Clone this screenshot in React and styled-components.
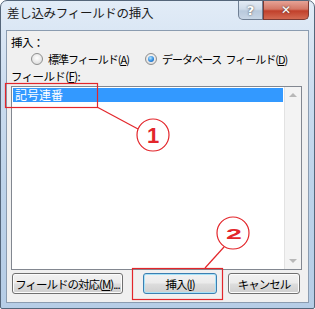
import React from "react"
import styled, { createGlobalStyle } from "styled-components"

const Global = createGlobalStyle`
html, body {
  margin: 0;
  padding: 0;
  background: #ffffff;
}
* {
  box-sizing: border-box;
}
`

const Window = styled.div`
position: relative;
width: 315px;
height: 309px;
display: flex;
flex-direction: column;
padding: 0 5px 5px 5px;
border: 1px solid #55667a;
border-radius: 7px 7px 2px 2px;
background: linear-gradient(180deg, #e2ecf7 0%, #cbdcef 30%, #bdd3ea 60%, #b6cde6 100%);
font-family: "Noto Sans CJK JP", "Noto Sans", sans-serif;
color: #000;
overflow: hidden;
`

const TitleBar = styled.div`
height: 29px;
display: flex;
align-items: flex-start;
flex-shrink: 0;
`

const Title = styled.div`
margin-top: 4px;
padding-left: 1px;
font-size: 12.5px;
line-height: 16px;
letter-spacing: -0.3px;
color: #1b1b1b;
`

const CaptionButtons = styled.div`
margin-left: auto;
display: flex;
`

const CaptionButton = styled.div`
width: ${p => p.$w}px;
height: 19px;
display: flex;
align-items: center;
justify-content: center;
border: 1px solid ${p => (p.$close ? "#7c3a33" : "#6f7f94")};
border-top: none;
border-radius: ${p => (p.$close ? "0 0 5px 0" : "0 0 0 5px")};
background: ${p =>
  p.$close
    ? "linear-gradient(180deg, #e6a396 0%, #d47766 45%, #c1402b 55%, #d36a52 100%)"
    : "linear-gradient(180deg, #e3ebf4 0%, #cfdbe9 45%, #b8c9dc 55%, #c8d6e6 100%)"};
color: #ffffff;
font-family: "DejaVu Sans", sans-serif;
font-weight: bold;
font-size: ${p => (p.$close ? 12 : 13)}px;
text-shadow: 0 0 2px #333;
`

const Panel = styled.div`
flex: 1;
display: flex;
flex-direction: column;
background: #f0f0f0;
border: 1px solid #8b9cb0;
padding: 4px 0 0 4px;
font-size: 11px;
line-height: 14px;
`

const Label = styled.div`
margin-top: ${p => p.$mt || 0}px;
font-size: 11.5px;
letter-spacing: -0.6px;
line-height: 14px;
`

const RadioRow = styled.div`
display: flex;
align-items: center;
margin-top: 3px;
padding-left: 20px;
height: 14px;
`

const RadioItem = styled.label`
display: flex;
align-items: center;
margin-right: ${p => p.$mr || 0}px;
font-size: 11px;
letter-spacing: -1px;
white-space: pre;
`

const WordGap = styled.span`
display: inline-block;
width: 4px;
`

const RadioCircle = styled.span`
position: relative;
width: 12px;
height: 12px;
margin-right: 5px;
border-radius: 50%;
border: 1px solid #8e8f8f;
background: radial-gradient(circle at 50% 40%, #ffffff 0%, #e6e6e6 60%, #d2d2d2 100%);
flex-shrink: 0;

&::after {
  content: "";
  display: ${p => (p.$checked ? "block" : "none")};
  position: absolute;
  left: 2px;
  top: 2px;
  width: 6px;
  height: 6px;
  border-radius: 50%;
  background: radial-gradient(circle at 40% 35%, #b5e6ff 0%, #2f8be0 55%, #14519c 100%);
}
`

const ListBox = styled.div`
margin-top: 3px;
margin-right: 6px;
height: 184px;
display: flex;
border: 1px solid #828790;
background: #ffffff;
`

const ListItems = styled.div`
flex: 1;
padding: 1px 1px 0 1px;
`

const ListRow = styled.div`
height: 14px;
padding-left: 2px;
font-size: 12px;
line-height: 14px;
background: ${p => (p.$selected ? "#3399ff" : "transparent")};
color: ${p => (p.$selected ? "#ffffff" : "#000000")};
`

const ScrollBar = styled.div`
width: 17px;
display: flex;
flex-direction: column;
justify-content: space-between;
align-items: center;
padding: 6px 0 6px 0;
background: #f3f3f3;
border-left: 1px solid #e2e2e2;
`

const Arrow = styled.span`
width: 0;
height: 0;
border-left: 4px solid transparent;
border-right: 4px solid transparent;
${p =>
  p.$down
    ? "border-top: 4px solid #b8b8b8;"
    : "border-bottom: 4px solid #b8b8b8;"}
`

const ButtonRow = styled.div`
display: flex;
margin-top: 3px;
padding-left: 1px;
`

const Button = styled.div`
width: ${p => p.$w}px;
height: 21px;
margin-left: ${p => p.$ml || 0}px;
display: flex;
align-items: center;
justify-content: center;
border: 1px solid ${p => (p.$default ? "#3c7fb1" : "#707070")};
border-radius: 3px;
background: linear-gradient(180deg, #f2f2f2 0%, #ebebeb 48%, #dddddd 52%, #cfcfcf 100%);
box-shadow: inset 0 0 0 1px ${p => (p.$default ? "#a6e2f8" : "#fcfcfc")};
font-size: 11.5px;
letter-spacing: -1px;
white-space: nowrap;
`

const Overlay = styled.svg`
position: absolute;
left: -1px;
top: -1px;
pointer-events: none;
`

const Annotations = () => (
  <Overlay width="315" height="309" viewBox="0 0 315 309">
    <g stroke="#e3262b" fill="none" strokeWidth="1.2">
      <rect x="5.5" y="83.5" width="92" height="24" />
      <line x1="97" y1="107" x2="138" y2="129" />
      <circle cx="153" cy="135" r="16" />
      <rect x="132.5" y="268.5" width="90" height="31" />
      <line x1="205" y1="268" x2="224" y2="247" />
      <circle cx="233" cy="233" r="16" />
    </g>
    <text x="153" y="143" textAnchor="middle" fill="#e3262b" fontFamily="Liberation Sans, sans-serif" fontWeight="bold" fontSize="22">1</text>
    <text x="234" y="240" textAnchor="middle" fill="#e3262b" fontFamily="Liberation Sans, sans-serif" fontWeight="bold" fontSize="19" transform="translate(234 236) scale(1.5 0.8) translate(-234 -236)">2</text>
  </Overlay>
)

const App = () => {
  return (
    <>
      <Global />
      <Window>
        <TitleBar>
          <Title>差し込みフィールドの挿入</Title>
          <CaptionButtons>
            <CaptionButton $w={25}>?</CaptionButton>
            <CaptionButton $w={46} $close>✕</CaptionButton>
          </CaptionButtons>
        </TitleBar>
        <Panel>
          <Label>挿入：</Label>
          <RadioRow>
            <RadioItem $mr={16}>
              <RadioCircle />
              標準フィールド(<u>A</u>)
            </RadioItem>
            <RadioItem>
              <RadioCircle $checked />
              データベース<WordGap> </WordGap>フィールド(<u>D</u>)
            </RadioItem>
          </RadioRow>
          <Label $mt={3}>フィールド(<u>F</u>):</Label>
          <ListBox>
            <ListItems>
              <ListRow $selected>記号連番</ListRow>
            </ListItems>
            <ScrollBar>
              <Arrow />
              <Arrow $down />
            </ScrollBar>
          </ListBox>
          <ButtonRow>
            <Button $w={111}>フィールドの対応(<u>M</u>)...</Button>
            <Button $w={74} $ml={20} $default>挿入(<u>I</u>)</Button>
            <Button $w={72} $ml={11}>キャンセル</Button>
          </ButtonRow>
        </Panel>
        <Annotations />
      </Window>
    </>
  )
}

export default App
